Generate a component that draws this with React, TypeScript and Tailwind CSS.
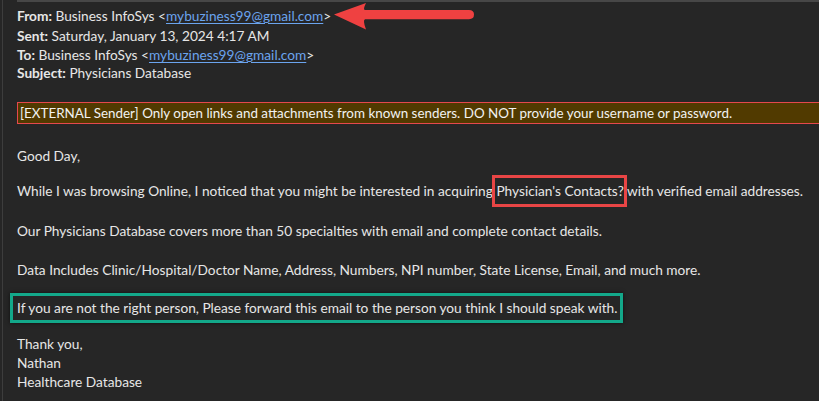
function Arrow() {
  return (
    <svg className="absolute left-[329px] top-0 w-[146px] h-[30px]" viewBox="0 0 146 30" fill="none">
      <path d="M2 12.5 L34 1 Q30.5 8 33 8 L137 8 Q142 8 142 12.6 Q142 17.2 137 17.2 L33 17.2 Q30.5 18 34 27.5 Z" fill="#ef4141" />
    </svg>
  );
}

function Link({ children }: { children: React.ReactNode }) {
  return <span className="text-[#6ba4ee] underline underline-offset-2 decoration-1">{children}</span>;
}

export default function App() {
  return (
    <div className="relative w-[819px] h-[401px] overflow-hidden bg-[#262626] text-[#e6e6e6] font-['Lato',sans-serif] text-[13.7px] leading-[19px]">
      <div className="ml-[2px] h-full border-l border-[#3d3d3d]">
        {/* ── top rule ─────────────────────────── */}
        <div className="ml-[14px] h-[2px] bg-[#474747]" />

        {/* ── header ───────────────────────────── */}
        <div className="relative pl-[14px] pt-[4px]">
          <div>
            <b>From:</b> Business InfoSys &lt;<Link>mybuziness99@gmail.com</Link>&gt;
          </div>
          <div className="mt-[1px]"><b>Sent:</b> Saturday, January 13, 2024 4:17 AM</div>
          <div><b>To:</b> Business InfoSys &lt;<Link>mybuziness99@gmail.com</Link>&gt;</div>
          <div className="-mt-[1px]"><b>Subject:</b> Physicians Database</div>
          <Arrow />
        </div>

        {/* ── external sender banner ───────────── */}
        <div className="ml-[14px] mt-[20px] w-[820px] h-[22px] border border-[#e5484d] bg-[#513a00] px-[2px] text-[13.4px] leading-[20px] text-[#f2f2f2] whitespace-nowrap">
          [EXTERNAL Sender] Only open links and attachments from known senders. DO NOT provide your username or password.
        </div>

        {/* ── body ─────────────────────────────── */}
        <div className="pl-[14px] pt-[22px] whitespace-nowrap">
          <p>Good Day,</p>
          <p className="mt-[16px]">
            While I was browsing Online, I noticed that you might be interested in acquiring{" "}
            <span className="relative">
              Physician's Contacts?
              <span className="absolute -left-[4px] -right-[3px] -top-[7px] -bottom-[8px] border-[3px] border-[#e84545]" />
            </span>{" "}
            with verified email addresses.
          </p>
          <p className="mt-[21px]">Our Physicians Database covers more than 50 specialties with email and complete contact details.</p>
          <p className="mt-[20px]">Data Includes Clinic/Hospital/Doctor Name, Address, Numbers, NPI number, State License, Email, and much more.</p>
          <p className="mt-[19px]">
            <span className="relative">
              If you are not the right person, Please forward this email to the person you think I should speak with.
              <span className="absolute -left-[7px] -right-[6px] -top-[6px] -bottom-[7px] border-[3px] border-[#13a88a] shadow-[0_0_4px_rgba(0,0,0,0.6)]" />
            </span>
          </p>
          <p className="mt-[17px]">Thank you,</p>
          <p>Nathan</p>
          <p>Healthcare Database</p>
        </div>
      </div>
    </div>
  );
}
